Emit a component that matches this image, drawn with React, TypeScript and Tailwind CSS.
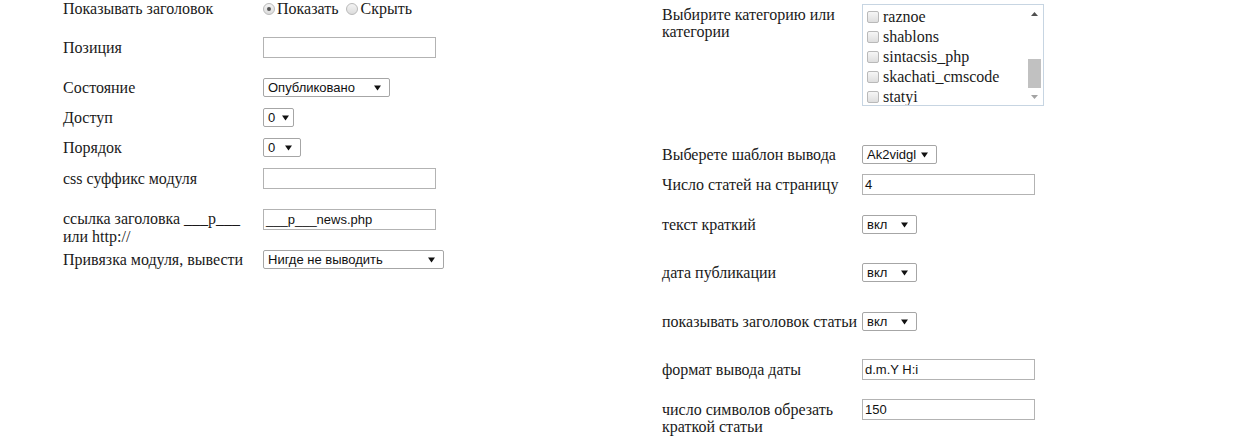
import React from 'react';

const serif = { fontFamily: '"Liberation Serif", "Times New Roman", serif' };
const sans = { fontFamily: '"Liberation Sans", Arial, sans-serif' };

function Arrow() {
  return (
    <svg width="7" height="6" viewBox="0 0 7 6" className="shrink-0">
      <path d="M0 0.5 L7 0.5 L3.5 5.5 Z" fill="#111" />
    </svg>
  );
}

function Select({ value, width, gap = 'justify-between' }: { value: string; width: string; gap?: string }) {
  return (
    <div
      className={`flex items-center ${gap} h-[19px] pl-[4px] pr-[8px] border border-[#a6a6a6] rounded-[2px] bg-white text-[13px] text-[#111] ${width}`}
      style={sans}
    >
      <span className="leading-none">{value}</span>
      <Arrow />
    </div>
  );
}

function Input({ value = '', width = 'w-[173px]' }: { value?: string; width?: string }) {
  return (
    <div
      className={`flex items-center h-[21px] px-[2px] border border-[#b3b3b3] bg-white text-[13px] text-[#111] ${width}`}
      style={sans}
    >
      {value}
    </div>
  );
}

function Radio({ checked }: { checked?: boolean }) {
  return (
    <span className="inline-flex items-center justify-center w-[12px] h-[12px] rounded-full border border-[#b9b9b9] bg-gradient-to-b from-[#f4f4f4] to-[#dcdcdc] mr-[2px]">
      {checked && <span className="w-[4px] h-[4px] rounded-full bg-[#555]" />}
    </span>
  );
}

function Checkbox() {
  return (
    <span className="inline-block w-[12px] h-[12px] rounded-[2px] border border-[#b9b9b9] bg-gradient-to-b from-[#f6f6f6] to-[#dedede] mr-[4px]" />
  );
}

function Row({ label, children, className = '', align = 'items-center' }: { label: React.ReactNode; children: React.ReactNode; className?: string; align?: string }) {
  return (
    <div className={`flex ${align} ${className}`}>
      <div className="w-[200px] shrink-0 leading-[17px] whitespace-nowrap">{label}</div>
      <div>{children}</div>
    </div>
  );
}

const categories = ['raznoe', 'shablons', 'sintacsis_php', 'skachati_cmscode', 'statyi'];

function CategoryBox() {
  return (
    <div className="flex w-[182px] h-[102px] border border-[#c7d5e2] bg-white overflow-hidden">
      <div className="flex-1 pt-[2px] pl-[4px]">
        {categories.map((c) => (
          <div key={c} className="flex items-center h-[20px] text-[16px] leading-none">
            <Checkbox />
            <span className="-mt-[1px]">{c}</span>
          </div>
        ))}
      </div>
      <div className="w-[17px] flex flex-col items-center bg-white">
        <div className="h-[19px] flex items-center justify-center">
          <svg width="7" height="4" viewBox="0 0 7 4"><path d="M0 4 L3.5 0 L7 4 Z" fill="#505050" /></svg>
        </div>
        <div className="h-[36px]" />
        <div className="w-[13px] h-[30px] bg-[#c1c1c1]" />
        <div className="flex-1" />
        <div className="h-[17px] flex items-center justify-center">
          <svg width="7" height="4" viewBox="0 0 7 4"><path d="M0 0 L7 0 L3.5 4 Z" fill="#a3a3a3" /></svg>
        </div>
      </div>
    </div>
  );
}

export default function App() {
  return (
    <div className="w-[1235px] h-[440px] bg-white text-[16px] text-[#1a1a1a] overflow-hidden flex" style={serif}>
      <div className="w-[599px] pl-[63px] flex flex-col">
        <Row label="Показывать заголовок" className="h-[17px]">
          <div className="flex items-center leading-[17px]">
            <Radio checked />
            <span>Показать</span>
            <span className="w-[8px]" />
            <Radio />
            <span>Скрыть</span>
          </div>
        </Row>
        <Row label="Позиция" className="mt-[20px]">
          <Input />
        </Row>
        <Row label="Состояние" className="mt-[20px]">
          <Select value="Опубликовано" width="w-[127px]" />
        </Row>
        <Row label="Доступ" className="mt-[11px]">
          <Select value="0" width="w-[31px]" gap="gap-[7px]" />
        </Row>
        <Row label="Порядок" className="mt-[11px]">
          <Select value="0" width="w-[38px]" />
        </Row>
        <Row label="css суффикс модуля" className="mt-[11px]">
          <Input />
        </Row>
        <Row
          label={<div className="leading-[18px] pt-[1px]">ссылка заголовка ___р___<br />или http://</div>}
          className="mt-[20px]"
          align="items-start"
        >
          <Input value="___p___news.php" />
        </Row>
        <Row label="Привязка модуля, вывести" className="mt-[4px]">
          <Select value="Нигде не выводить" width="w-[181px]" />
        </Row>
      </div>

      <div className="pl-[63px] flex flex-col pt-[4px]">
        <Row
          label={<div className="pt-[2px]">Выбирите категорию или<br />категории</div>}
          align="items-start"
        >
          <CategoryBox />
        </Row>
        <Row label="Выберете шаблон вывода" className="mt-[39px]">
          <Select value="Ak2vidgl" width="w-[75px]" />
        </Row>
        <Row label="Число статей на страницу" className="mt-[10px]">
          <Input value="4" />
        </Row>
        <Row label="текст краткий" className="mt-[20px]">
          <Select value="вкл" width="w-[55px]" />
        </Row>
        <Row label="дата публикации" className="mt-[29px]">
          <Select value="вкл" width="w-[55px]" />
        </Row>
        <Row label="показывать заголовок статьи" className="mt-[30px]">
          <Select value="вкл" width="w-[55px]" />
        </Row>
        <Row label="формат вывода даты" className="mt-[28px]">
          <Input value="d.m.Y H:i" />
        </Row>
        <Row
          label={<div className="pt-[2px]">число символов обрезать<br />краткой статьи</div>}
          className="mt-[19px]"
          align="items-start"
        >
          <Input value="150" />
        </Row>
      </div>
    </div>
  );
}
